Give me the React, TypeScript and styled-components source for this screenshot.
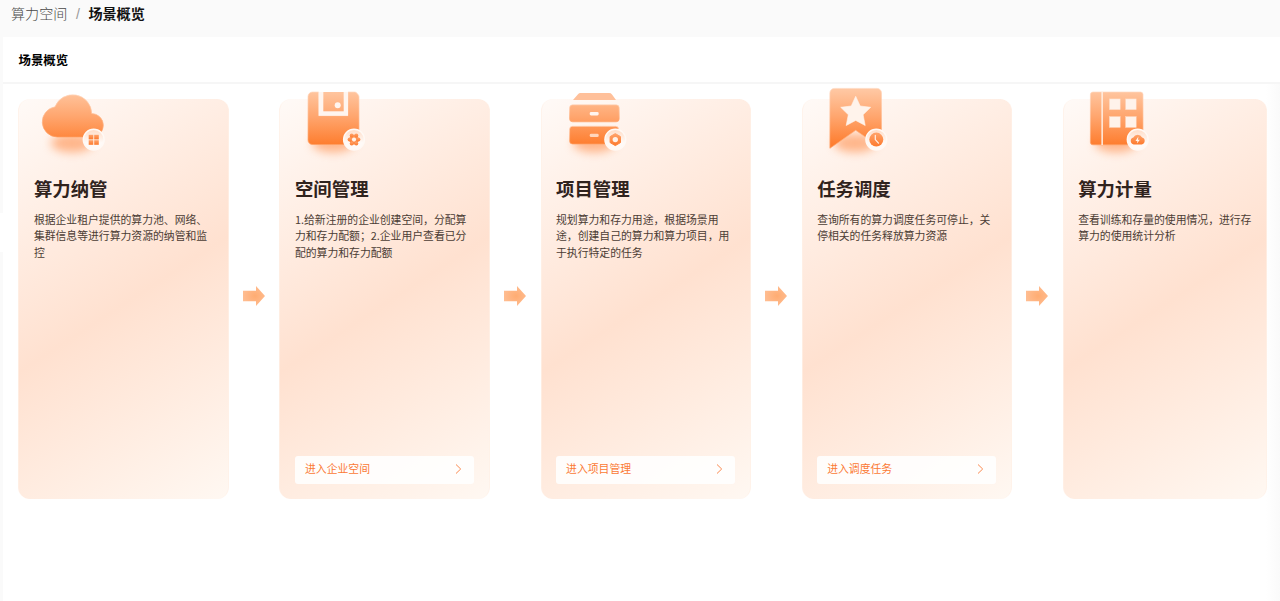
import React from "react";
import styled, { createGlobalStyle } from "styled-components";

const GlobalStyle = createGlobalStyle`
  *, *::before, *::after { box-sizing: border-box; }
  body {
    margin: 0;
    background: #fafafa;
    color: #000;
    font-family: "Noto Sans CJK SC", sans-serif;
    overflow: hidden;
  }
`;

const Page = styled.div`
  display: flex;
  flex-direction: column;
  height: 601px;
`;

const Breadcrumb = styled.nav`
  display: flex;
  align-items: center;
  height: 37px;
  padding: 0 0 11px 11px;
  font-size: 14.1px;
  line-height: 20px;
  white-space: nowrap;
`;

const Crumb = styled.span<{ $current?: boolean }>`
  color: ${(p) => (p.$current ? "#111" : "#484848")};
  font-weight: ${(p) => (p.$current ? 700 : 300)};
`;

const Slash = styled.span`
  width: 21px;
  padding-top: 2px;
  text-align: center;
  color: #999;
  font-family: "Liberation Sans", sans-serif;
`;

const Body = styled.div`
  display: flex;
  flex: 1;
`;

const Rail = styled.div`
  width: 3px;
  padding-top: 176px;
`;

const RailHandle = styled.div`
  height: 39px;
  background: #fff;
`;

const Panel = styled.main`
  flex: 1;
  background: linear-gradient(90deg, #fff 1263px, #fafafa 1277px);
`;

const PanelTitle = styled.h1`
  margin: 0;
  height: 47px;
  padding: 0 15.5px;
  border-bottom: 2px solid #f6f6f6;
  background: #fff;
  font-size: 12.4px;
  font-weight: 700;
  line-height: 47px;
  white-space: nowrap;
`;

const Flow = styled.section`
  display: flex;
  align-items: center;
  padding: 15px 12px 0 15.4px;
`;

const Card = styled.article<{ $last?: boolean }>`
  display: flex;
  flex-direction: column;
  flex: none;
  width: ${(p) => (p.$last ? 204 : 210.2)}px;
  height: 399.5px;
  padding: 0 14.4px 14.5px 14.5px;
  border: 1px solid rgba(255, 241, 231, 0.7);
  border-top: 0;
  border-bottom: 0;
  border-radius: 12px;
  background: linear-gradient(147deg, #fffaf7 0%, #ffe1d0 51%, #fff8f2 100%) border-box;
`;

const IconBox = styled.svg`
  flex: none;
  width: 80px;
  height: 80px;
  margin-top: -13px;
  overflow: visible;
`;

const CardTitle = styled.h2`
  margin: 9px 0 0;
  font-size: 18.4px;
  font-weight: 700;
  line-height: 27px;
  color: #30231d;
  white-space: nowrap;
`;

const CardText = styled.p`
  margin: 9px 0 0;
  font-size: 10.83px;
  font-weight: 400;
  line-height: 16.4px;
  color: #4b3c34;
  white-space: nowrap;
`;

const EnterButton = styled.button`
  display: flex;
  align-items: center;
  justify-content: space-between;
  width: 100%;
  height: 28px;
  margin-top: auto;
  padding: 0 12px 2px 10px;
  border: 0;
  border-radius: 3px;
  background: rgba(255, 255, 255, 0.87);
  color: #fb7a35;
  font-family: inherit;
  font-size: 10.85px;
  line-height: 24px;
  white-space: nowrap;
`;

const ButtonLabel = styled.span`
  padding-bottom: 2px;
`;

const Connector = styled.div`
  display: flex;
  justify-content: center;
  flex: none;
  width: 50.9px;
  padding-bottom: 6px;
`;

const Gradients = () => (
  <svg width="0" height="0" style={{ display: "block" }} aria-hidden="true">
    <defs>
      <linearGradient id="body" gradientUnits="userSpaceOnUse" x1="0" y1="4" x2="0" y2="58">
        <stop offset="0" stopColor="#ffc7a2" />
        <stop offset="0.5" stopColor="#ffa56d" />
        <stop offset="1" stopColor="#fe7e30" />
      </linearGradient>
      <linearGradient id="edge" x1="0" y1="0" x2="0" y2="1">
        <stop offset="0" stopColor="#ffd9c1" />
        <stop offset="1" stopColor="#ffa064" />
      </linearGradient>
      <linearGradient id="badge" x1="0" y1="0" x2="0" y2="1">
        <stop offset="0" stopColor="#ffdcc6" />
        <stop offset="0.65" stopColor="#fffaf7" />
      </linearGradient>
      <linearGradient id="mark" x1="0" y1="0" x2="0" y2="1">
        <stop offset="0" stopColor="#ffa36b" />
        <stop offset="1" stopColor="#fd7a2d" />
      </linearGradient>
      <radialGradient id="arrow" cx="0.55" cy="0.5" r="0.55">
        <stop offset="0" stopColor="#ffac72" />
        <stop offset="1" stopColor="#ffbd91" />
      </radialGradient>
      <filter id="soft" x="-60%" y="-150%" width="220%" height="400%">
        <feGaussianBlur stdDeviation="5" />
      </filter>
    </defs>
  </svg>
);

const Glow = () => (
  <ellipse cx="38" cy="57" rx="21" ry="9.5" fill="#ff9557" opacity="0.65" filter="url(#soft)" />
);

const Badge = ({ cx, children }: { cx: number; children: React.ReactNode }) => (
  <g transform={`translate(${cx} 53.6)`}>
    <circle r="10.4" fill="url(#badge)" stroke="#fff9f5" strokeWidth="1.4" />
    {children}
  </g>
);

const CloudIcon = () => (
  <IconBox viewBox="0 0 80 80">
    <Glow />
    <path
      d="M23.3 51A15.2 15.2 0 0 1 21 20.8A19 19 0 0 1 57.7 27.5A11.75 11.75 0 0 1 57.5 51Z"
      fill="url(#body)"
      stroke="url(#edge)"
      strokeWidth="0.7"
    />
    <Badge cx={59.7}>
      <g fill="url(#mark)">
        <rect x="-5" y="-4.8" width="4.6" height="4.6" />
        <rect x="0.5" y="-4.8" width="4.6" height="4.6" />
        <rect x="-5" y="0.6" width="4.6" height="4.6" />
        <rect x="0.5" y="0.6" width="4.6" height="4.6" />
      </g>
    </Badge>
  </IconBox>
);

const DiskIcon = () => (
  <IconBox viewBox="0 0 80 80">
    <Glow />
    <path
      d="M17.5 6H23.7V29.7H53V6H59.5Q61 6 62 7.2L63.4 9Q64 9.8 64 11V54A4.5 4.5 0 0 1 59.5 58.5H17.5A4.5 4.5 0 0 1 13 54V10.5A4.5 4.5 0 0 1 17.5 6Z"
      fill="url(#body)"
      stroke="url(#edge)"
      strokeWidth="0.7"
    />
    <path d="M23.7 6H28.3V25.3H48.7V6H53V29.7H23.7Z" fill="#fff5ef" />
    <rect x="28.3" y="6" width="20.4" height="19.3" fill="url(#body)" />
    <circle cx="42.7" cy="19.3" r="3" fill="#fff5ef" />
    <Badge cx={59}>
      <g fill="url(#mark)">
        <circle r="4.8" />
        <circle cx="-4.4" r="2" />
        <circle cx="4.4" r="2" />
        <circle cx="-2.3" cy="-4" r="2" />
        <circle cx="2.3" cy="-4" r="2" />
        <circle cx="-2.3" cy="4" r="2" />
        <circle cx="2.3" cy="4" r="2" />
      </g>
      <circle r="2.1" fill="#fff1e8" />
    </Badge>
  </IconBox>
);

const CabinetIcon = () => (
  <IconBox viewBox="0 0 80 80">
    <Glow />
    <path d="M24.5 7H53Q55 7 56 8.4L60 14H17L22 8.2Q23 7 24.5 7Z" fill="#ffc09a" />
    <rect x="13.6" y="18.8" width="49.6" height="17" rx="3" fill="url(#body)" stroke="url(#edge)" strokeWidth="0.7" />
    <rect x="13.6" y="40.2" width="49" height="17.8" rx="3" fill="url(#body)" stroke="url(#edge)" strokeWidth="0.7" />
    <rect x="33.7" y="26.1" width="9" height="3.3" rx="1.4" fill="#fff5ef" />
    <rect x="33.7" y="47.8" width="9" height="3.3" rx="1.4" fill="#ffd6bc" />
    <Badge cx={59.3}>
      <path
        d="M0-6 5.2-3V3L0 6-5.2 3V-3Z"
        fill="url(#mark)"
        stroke="url(#mark)"
        strokeWidth="1"
        strokeLinejoin="round"
      />
      <circle r="2.7" fill="#fff1e8" />
    </Badge>
  </IconBox>
);

const BookmarkIcon = () => (
  <IconBox viewBox="0 0 80 80">
    <Glow />
    <path
      d="M17.5 2.4H60A4.5 4.5 0 0 1 64.5 6.9V62L38.7 44.3L12.9 62.3V6.9A4.5 4.5 0 0 1 17.5 2.4Z"
      fill="url(#body)"
      stroke="url(#edge)"
      strokeWidth="0.7"
    />
    <path
      d="M38.7 10.3L43.2 20 53.7 21.3 46.1 28.7 48.2 39.5 38.7 34.4 29.2 39.5 31.3 28.7 23.7 21.3 34.2 20Z"
      fill="#fff3eb"
      stroke="#fff3eb"
      strokeWidth="0.6"
      strokeLinejoin="round"
    />
    <Badge cx={59.3}>
      <circle r="7" fill="url(#mark)" />
      <path d="M-1-4.2V0L2.2 3.5" fill="none" stroke="#fff1e8" strokeWidth="1.2" strokeLinecap="round" />
    </Badge>
  </IconBox>
);

const LedgerIcon = () => (
  <IconBox viewBox="0 0 80 80">
    <Glow />
    <rect x="12.4" y="6" width="52.6" height="52.8" rx="2.5" fill="url(#body)" stroke="url(#edge)" strokeWidth="0.7" />
    <rect x="23.4" y="6" width="1.5" height="53" fill="#ffeee3" />
    <g fill="#fff3eb" stroke="#ffd6bc" strokeWidth="0.5">
      <rect x="31.4" y="12.9" width="10.8" height="10.8" />
      <rect x="47.6" y="12.9" width="10.6" height="10.8" />
      <rect x="31.4" y="30.6" width="10.8" height="10.8" />
      <rect x="47.6" y="30.6" width="10.6" height="10.8" />
    </g>
    <Badge cx={59.7}>
      <path
        d="M-4 4.8A3.6 3.6 0 0 1-4.4-2.2A5 5 0 0 1 4.4-2.2A3.6 3.6 0 0 1 4 4.8Z"
        fill="url(#mark)"
      />
      <path d="M.7-3-2.2 1.3H-.3L-.8 4 2.2.2H.3Z" fill="#fff5ef" />
    </Badge>
  </IconBox>
);

const Arrow = () => (
  <svg width="22" height="20" viewBox="0 0 22 20">
    <path d="M0 4.8H13V0L22 10L13 20V15.2H0Z" fill="url(#arrow)" />
  </svg>
);

const Chevron = () => (
  <svg width="7" height="10" viewBox="0 0 7 10">
    <path d="M1 .5 5.7 5 1 9.5" fill="none" stroke="#fb8a50" strokeWidth="1" />
  </svg>
);

type Step = {
  title: string;
  lines: string[];
  icon: () => React.ReactElement;
  action?: string;
};

const steps: Step[] = [
  {
    title: "算力纳管",
    lines: ["根据企业租户提供的算力池、网络、", "集群信息等进行算力资源的纳管和监", "控"],
    icon: CloudIcon,
  },
  {
    title: "空间管理",
    lines: ["1.给新注册的企业创建空间，分配算", "力和存力配额；2.企业用户查看已分", "配的算力和存力配额"],
    icon: DiskIcon,
    action: "进入企业空间",
  },
  {
    title: "项目管理",
    lines: ["规划算力和存力用途，根据场景用", "途，创建自己的算力和算力项目，用", "于执行特定的任务"],
    icon: CabinetIcon,
    action: "进入项目管理",
  },
  {
    title: "任务调度",
    lines: ["查询所有的算力调度任务可停止，关", "停相关的任务释放算力资源"],
    icon: BookmarkIcon,
    action: "进入调度任务",
  },
  {
    title: "算力计量",
    lines: ["查看训练和存量的使用情况，进行存", "算力的使用统计分析"],
    icon: LedgerIcon,
  },
];

export default function App() {
  return (
    <>
      <GlobalStyle />
      <Gradients />
      <Page>
        <Breadcrumb>
          <Crumb>算力空间</Crumb>
          <Slash>/</Slash>
          <Crumb $current>场景概览</Crumb>
        </Breadcrumb>
        <Body>
          <Rail>
            <RailHandle />
          </Rail>
          <Panel>
            <PanelTitle>场景概览</PanelTitle>
            <Flow>
              {steps.map(({ title, lines, icon: Icon, action }, i) => (
                <React.Fragment key={title}>
                  {i > 0 && (
                    <Connector>
                      <Arrow />
                    </Connector>
                  )}
                  <Card $last={i === steps.length - 1}>
                    <Icon />
                    <CardTitle>{title}</CardTitle>
                    <CardText>
                      {lines.map((line, n) => (
                        <React.Fragment key={line}>
                          {n > 0 && <br />}
                          {line}
                        </React.Fragment>
                      ))}
                    </CardText>
                    {action && (
                      <EnterButton>
                        <ButtonLabel>{action}</ButtonLabel>
                        <Chevron />
                      </EnterButton>
                    )}
                  </Card>
                </React.Fragment>
              ))}
            </Flow>
          </Panel>
        </Body>
      </Page>
    </>
  );
}
